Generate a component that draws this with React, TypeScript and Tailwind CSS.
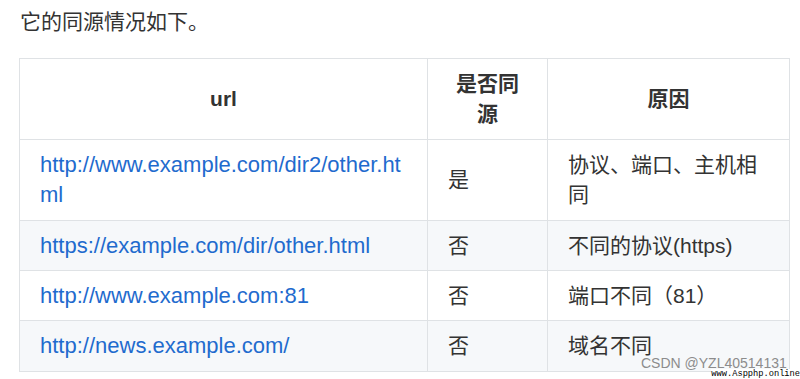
import React from "react";

const rows = [
  { url: "http://www.example.com/dir2/other.html", same: "是", reason: "协议、端口、主机相同", h: "h-[81px]" },
  { url: "https://example.com/dir/other.html", same: "否", reason: "不同的协议(https)", h: "h-[50px]" },
  { url: "http://www.example.com:81", same: "否", reason: "端口不同（81）", h: "h-[50px]" },
  { url: "http://news.example.com/", same: "否", reason: "域名不同", h: "h-[51px]" },
];

export default function App() {
  return (
    <div className="relative w-[800px] h-[379px] overflow-hidden bg-white font-['Liberation_Sans','Noto_Sans_CJK_SC',sans-serif] text-[#333]">
      <p className="pl-[20px] pt-[7px] text-[21px] leading-[30px]">它的同源情况如下。</p>

      <table className="ml-[19px] mt-[21px] w-[770px] table-fixed border-collapse text-[21px] leading-[30px]">
        <colgroup>
          <col className="w-[408px]" />
          <col className="w-[120px]" />
          <col className="w-[242px]" />
        </colgroup>
        <thead>
          <tr className="h-[81px]">
            <th className="border border-[#dfe2e5] px-[20px] py-[9px] text-center font-bold">url</th>
            <th className="border border-[#dfe2e5] px-[20px] py-[9px] text-center font-bold">是否同源</th>
            <th className="border border-[#dfe2e5] px-[20px] py-[9px] text-center font-bold">原因</th>
          </tr>
        </thead>
        <tbody>
          {rows.map((r, i) => (
            <tr key={r.url} className={`${r.h} ${i % 2 === 1 ? "bg-[#f6f8fa]" : "bg-white"}`}>
              <td className="border border-[#dfe2e5] px-[20px] py-[9px] break-all text-[22px] text-[#1f6bce]">
                {r.url}
              </td>
              <td className="border border-[#dfe2e5] px-[20px] py-[9px]">{r.same}</td>
              <td className="border border-[#dfe2e5] px-[20px] py-[9px]">{r.reason}</td>
            </tr>
          ))}
        </tbody>
      </table>

      {/* watermark */}
      <span className="absolute left-[641px] top-[355px] whitespace-nowrap text-[14px] leading-[16px] text-[#8c8c8c]">
        CSDN @YZL40514131
      </span>
      <span className="absolute right-0 top-[369px] whitespace-nowrap bg-white font-['Liberation_Mono',monospace] text-[8.7px] leading-[10px] text-black">
        www.Aspphp.online
      </span>
    </div>
  );
}
